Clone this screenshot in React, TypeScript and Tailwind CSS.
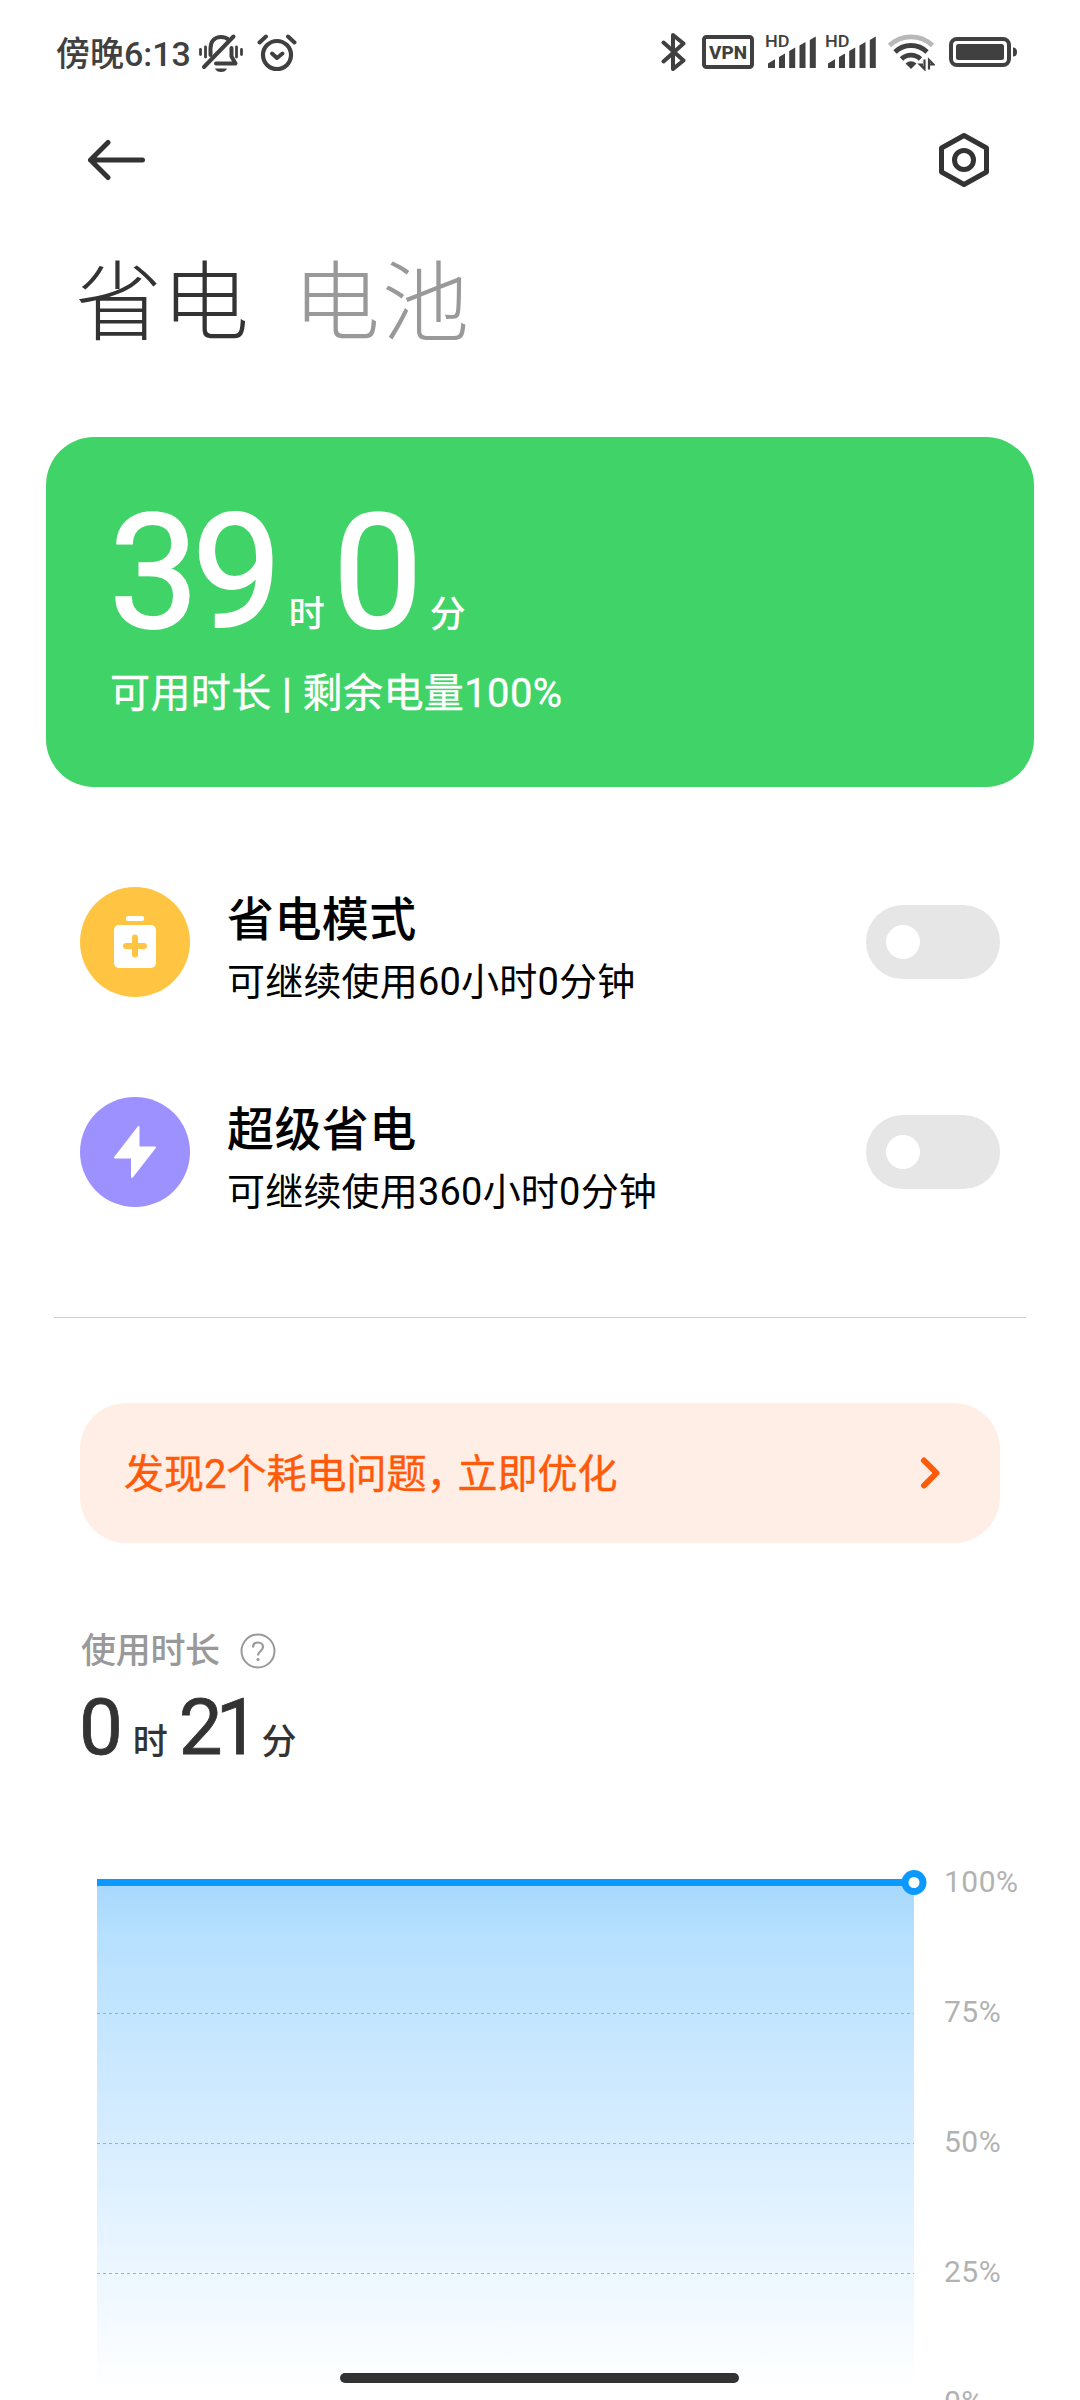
import React, { useState } from "react";

type ModeRowProps = {
  title: string;
  desc: string;
  color: string;
  icon: React.ReactNode;
  checked: boolean;
  onChange: (value: boolean) => void;
};

const MutedBell = () => (
  <svg width="46" height="40" viewBox="0 0 46 40" fill="none" stroke="#404040" strokeWidth="4" strokeLinecap="round">
    <path d="M12.500 22V15.500C12.500 8 17 4 23 4c3 0 6 1 8 3" />
    <path d="M33.500 15v8.500l4 7H18" strokeLinejoin="round" />
    <path d="M6 34 35.500 3.500" />
    <path d="M17 35.500h12c-1 2.500-3 3.500-6 3.500s-5-1-6-3.500z" fill="#404040" stroke="none" />
    <path d="M2.500 16.500v5M7.500 14v10M38.500 14v10M43.500 16.500v5" strokeWidth="2.800" />
  </svg>
);

const AlarmClock = () => (
  <svg width="40" height="40" viewBox="0 0 40 40" fill="none" stroke="#404040" strokeLinecap="round" strokeLinejoin="round">
    <circle cx="20" cy="22" r="14" strokeWidth="4.200" />
    <path d="M2.500 9.500 9 3.500M37.500 9.500 31 3.500" strokeWidth="4" />
    <path d="m15 20.500 5 4.500 5.500-4.500" strokeWidth="4" />
  </svg>
);

const Bluetooth = () => (
  <svg width="26" height="40" viewBox="0 0 26 40" fill="none" stroke="#404040" strokeWidth="4" strokeLinecap="round" strokeLinejoin="round">
    <path d="M2.500 10.500 22.500 28.500 12 37V3l10.500 8.500L2.500 29.500" />
  </svg>
);

const Vpn = () => (
  <svg width="52" height="34" viewBox="0 0 52 34" fill="none">
    <rect x="2" y="2" width="48" height="30" rx="2.500" stroke="#404040" strokeWidth="4" />
    <text
      x="26"
      y="23.800"
      textAnchor="middle"
      textLength="38"
      lengthAdjust="spacingAndGlyphs"
      fill="#404040"
      fontFamily="Roboto, sans-serif"
      fontWeight="800"
      fontSize="19"
    >
      VPN
    </text>
  </svg>
);

const Signal = () => (
  <svg width="50" height="38" viewBox="0 -4 50 38" fill="#404040" className="overflow-visible">
    <text
      x="-1"
      y="12"
      textLength="24.500"
      lengthAdjust="spacingAndGlyphs"
      fontFamily="Roboto, sans-serif"
      fontWeight="500"
      fontSize="16.500"
    >
      HD
    </text>
    <path d="M2 32.500V28.500L8.500 24.500h.5v8q0 .5-1 .5H3q-1 0-1-.5z" />
    <path d="M13 33V22l6-3.500V33zM23.200 33V16l6-3.500V33zM33.500 33V10.500l6-3.500v26zM43.800 33V5l6-3.500V33z" />
  </svg>
);

const Wifi = () => (
  <svg width="48" height="38" viewBox="0 0 48 38" fill="none" strokeWidth="4.800">
    <path d="M2.500 12.500a31 31 0 0 1 43 0" stroke="#b8b8b8" />
    <path d="M8 19a23 23 0 0 1 32 0" stroke="#404040" />
    <path d="M14.500 26a13.500 13.500 0 0 1 19 0" stroke="#404040" />
    <path d="m24 36-5.500-5.500q5.500-4.500 11 0z" fill="#404040" />
    <path d="M37.500 26.500v9.500L33 31.500h3M42 36.500V27l4.500 4.500H43" stroke="#404040" strokeWidth="2.200" />
  </svg>
);

const Battery = () => (
  <svg width="70" height="30" viewBox="0 0 70 30" fill="none">
    <rect x="2" y="2" width="58" height="26" rx="6" stroke="#404040" strokeWidth="4" />
    <rect x="7" y="7" width="48" height="16" rx="2.500" fill="#404040" />
    <path d="M64 10.500q4 0 4 4.500t-4 4.500z" fill="#404040" />
  </svg>
);

const BatteryPlus = () => (
  <svg width="44" height="54" viewBox="0 0 44 54">
    <rect x="13" y="1" width="18" height="5" rx="2" fill="#fff" />
    <rect x="1" y="10" width="42" height="43" rx="5" fill="#fff" />
    <path d="M22 22.500v17M13 31h18" stroke="#ffc542" strokeWidth="6" strokeLinecap="round" />
  </svg>
);

const Bolt = () => (
  <svg width="44" height="54" viewBox="0 0 44 54">
    <path d="M25.500 2v20.500H42L19 52V32.500H2z" fill="#fff" stroke="#fff" strokeWidth="2" strokeLinejoin="round" />
  </svg>
);

const StatusBar = () => (
  <div className="flex h-[108px] items-center justify-between pr-[61px] pl-[56px] text-[#404040]">
    <div className="flex items-center">
      <span className="text-[34px] leading-[34px] font-medium">傍晚6:13</span>
      <div className="ml-[7px] flex items-center gap-[13px] pb-[3px]">
        <MutedBell />
        <AlarmClock />
      </div>
    </div>
    <div className="flex items-center pb-[4px]">
      <Bluetooth />
      <div className="ml-[15px]">
        <Vpn />
      </div>
      <div className="ml-[12px] flex gap-[10px] pb-[4px]">
        <Signal />
        <Signal />
      </div>
      <div className="ml-[11px]">
        <Wifi />
      </div>
      <div className="ml-[14px]">
        <Battery />
      </div>
    </div>
  </div>
);

const ModeRow: React.FC<ModeRowProps> = ({ title, desc, color, icon, checked, onChange }) => {
  return (
    <div className="flex h-[110px] items-center">
      <div className={`flex size-[110px] items-center justify-center rounded-full ${color}`}>{icon}</div>
      <div className="ml-[37px] flex flex-1 flex-col pt-[10px] text-black">
        <h2 className="text-[47px] leading-[64px] font-medium tracking-[0.400px]">{title}</h2>
        <p className="mt-[5px] text-[38px] leading-[50px] tracking-[0.200px]">{desc}</p>
      </div>
      <button
        role="switch"
        aria-checked={checked}
        onClick={() => onChange(!checked)}
        className={`flex h-[74px] w-[134px] items-center rounded-full px-[20px] ${
          checked ? "justify-end bg-[#0d84ff]" : "justify-start bg-[#e6e6e6]"
        }`}
      >
        <span className="size-[34px] rounded-full bg-white" />
      </button>
    </div>
  );
};

const levels = ["100%", "75%", "50%", "25%", "0%"];

const BatteryChart = () => (
  <div className="mt-[49px] flex pl-[97px]">
    <svg width="833" height="583" viewBox="0 0 833 583" className="shrink-0">
      <defs>
        <linearGradient id="level" x1="0" y1="0" x2="0" y2="1">
          <stop offset="0" stopColor="#a6d8fc" />
          <stop offset="0.100" stopColor="#b6e0ff" />
          <stop offset="0.500" stopColor="#d7edff" />
          <stop offset="0.980" stopColor="#ffffff" />
        </linearGradient>
      </defs>
      <rect x="0" y="66" width="817" height="517" fill="url(#level)" />
      {[196, 326, 456].map((y) => (
        <path key={y} d={`M0 ${y + 0.5}H817`} stroke="#9dafbd" strokeWidth="1" strokeDasharray="3 3" />
      ))}
      <path d="M0 65.500H817" stroke="#0b98ff" strokeWidth="7" />
      <circle cx="817" cy="65.500" r="9" fill="#fff" stroke="#0b98ff" strokeWidth="7" />
    </svg>
    <div className="ml-[14px] h-[583px] text-[30px] tracking-[0.500px] text-[#b2b2b2]">
      {levels.map((level) => (
        <div key={level} className="flex h-[130px] items-center leading-[30px]">
          {level}
        </div>
      ))}
    </div>
  </div>
);

const App: React.FC = () => {
  const [saver, setSaver] = useState<boolean>(false);
  const [ultra, setUltra] = useState<boolean>(false);

  return (
    <div className="relative h-[2400px] w-[1080px] overflow-hidden bg-white font-[Roboto,'Noto_Sans_CJK_SC',sans-serif] text-[#333]">
      <StatusBar />

      <header className="flex h-[104px] items-center justify-between pr-[90px] pl-[86px]">
        <svg width="60" height="42" viewBox="0 0 60 42" fill="none" stroke="#333" strokeWidth="5" strokeLinecap="round" strokeLinejoin="round">
          <path d="M22 3.500 4.500 21l17.500 17.500M4.500 21h52" />
        </svg>
        <svg width="52" height="56" viewBox="0 0 52 56" fill="none" stroke="#333" strokeWidth="5" strokeLinejoin="round">
          <path d="M26 3.500 48.500 16v24L26 52.500 3.500 40V16z" />
          <circle cx="26" cy="28" r="9.500" />
        </svg>
      </header>

      <nav className="flex h-[183px] items-center gap-[44px] pl-[75px] text-[87px] leading-[88px] font-light">
        <span>省电</span>
        <span className="tracking-[2px] text-[#999]">电池</span>
      </nav>

      <section className="mx-[46px] mt-[42px] h-[350px] rounded-[48px] bg-[#40d368] pt-[56px] pl-[63px] text-white">
        <div className="flex h-[160px] items-baseline text-[36px] leading-[36px] font-medium">
          <span className="text-[160px] leading-[160px] font-normal tracking-[-7px] [-webkit-text-stroke:2px_white]">39</span>
          <span className="ml-[14px]">时</span>
          <span className="ml-[8px] text-[160px] leading-[160px] font-normal tracking-[-7px] [-webkit-text-stroke:2px_white]">0</span>
          <span className="ml-[14px]">分</span>
        </div>
        <p className="mt-[11px] ml-px text-[40px] leading-[60px] tracking-[0.400px] [-webkit-text-stroke:0.4px_white]">
          可用时长 <span className="font-medium">|</span> 剩余电量100%
        </p>
      </section>

      <section className="mt-[100px] flex flex-col gap-[100px] px-[80px]">
        <ModeRow
          title="省电模式"
          desc="可继续使用60小时0分钟"
          color="bg-[#ffc542]"
          icon={<BatteryPlus />}
          checked={saver}
          onChange={setSaver}
        />
        <ModeRow
          title="超级省电"
          desc="可继续使用360小时0分钟"
          color="bg-[#9d91ff]"
          icon={<Bolt />}
          checked={ultra}
          onChange={setUltra}
        />
      </section>

      <hr className="mx-[54px] mt-[110px] border-t border-[#d0d0d0]" />

      <button className="mx-[80px] mt-[85px] flex h-[140px] w-[920px] items-center justify-between rounded-[46px] bg-[#ffeee5] pr-[60px] pl-[44px] text-[40px] leading-[60px] text-[#ff5a0a]">
        <span className="pt-[3px] [-webkit-text-stroke:0.4px_#ff5a0a]">
          发现2个耗电问题<span className="tracking-[-9px]">，</span>立即优化
        </span>
        <svg width="20" height="32" viewBox="0 0 20 32" fill="none" stroke="#ff5a0a" strokeWidth="6" strokeLinecap="round" strokeLinejoin="round">
          <path d="m4 3.500 12.500 12.500L4 28.500" />
        </svg>
      </button>

      <section className="mt-[84px] pl-[79px]">
        <div className="flex h-[50px] items-center pl-[2px] text-[35px] leading-[50px] font-medium tracking-[-0.300px] text-[#999]">
          使用时长
          <svg width="36" height="36" viewBox="0 0 36 36" fill="none" className="mb-[3px] ml-[20px]">
            <circle cx="18" cy="18" r="16.500" stroke="#999" strokeWidth="2" />
            <path d="M13 14.500c0-3 2-5 5-5s5 2 5 4.500c0 4-5 4-5 8.500" stroke="#999" strokeWidth="2.200" />
            <circle cx="18" cy="26.500" r="1.600" fill="#999" />
          </svg>
        </div>
        <div className="mt-[11px] flex h-[80px] items-baseline text-[35px] leading-[35px] font-medium">
          <span className="text-[78px] leading-[80px] font-normal [-webkit-text-stroke:0.8px_#333]">0</span>
          <span className="ml-[10px]">时</span>
          <span className="ml-[11px] text-[78px] leading-[80px] font-normal tracking-[-7px] [-webkit-text-stroke:0.8px_#333]">21</span>
          <span className="ml-[9px]">分</span>
        </div>
      </section>

      <BatteryChart />

      {/* gesture bar */}
      <div className="absolute bottom-[17px] left-[340px] h-[10px] w-[399px] rounded-full bg-[#333]" />
    </div>
  );
};

export default App;
